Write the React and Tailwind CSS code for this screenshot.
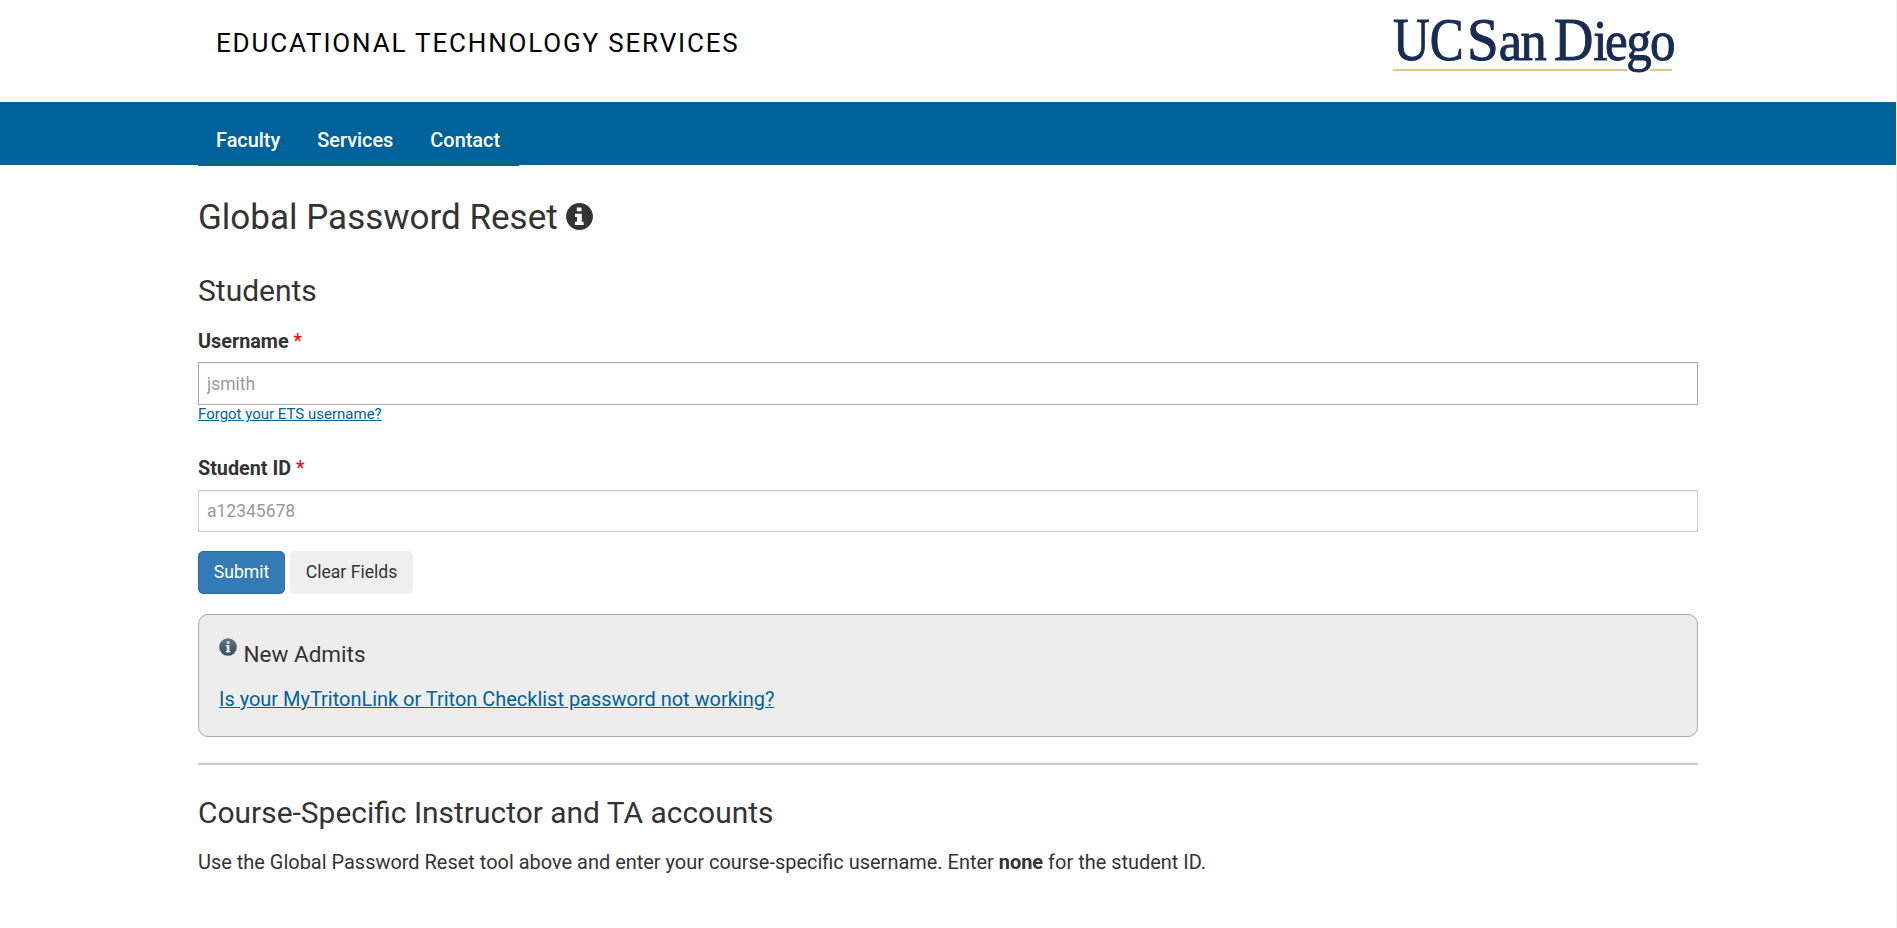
import React from "react";

function InfoGlyph() {
  return (
    <svg className="block h-[27px] w-[27px]" viewBox="0 0 27 27">
      <circle cx="13.5" cy="13.5" r="13.4" fill="#333" />
      <path fill="#fff" d="M10.8 4.4h4.7v3.9h-4.7zM9 10.7h6.8v8h1.9v3.3H9v-3.3h2V14H9z" />
    </svg>
  );
}

function NoticeIcon() {
  return (
    <svg className="block h-[18px] w-[18px]" viewBox="0 0 18 18">
      <defs>
        <linearGradient id="notice" x1="0" y1="0" x2="0" y2="1">
          <stop offset="0" stopColor="#5b7486" />
          <stop offset="1" stopColor="#3a4b58" />
        </linearGradient>
      </defs>
      <circle cx="9" cy="9" r="8.8" fill="url(#notice)" />
      <path fill="#dde3e8" d="M7.6 3.2h2.9v2.5H7.6zM6.8 6.9h3.7v6.2h.9v1.4H6.8v-1.4h.9V8.3h-.9z" />
    </svg>
  );
}

function Logo() {
  return (
    <svg className="block h-[80px] w-[290px]" viewBox="0 0 290 80">
      <path d="M0 70h234M257 70h22" stroke="#e6c28a" strokeWidth="2" />
      <g fill="#182b54" stroke="#182b54" strokeWidth="1" className="font-['Liberation_Serif',serif] text-[62px]">
        <text transform="translate(0 60.2) scale(.82 1)" x="0 44.8" y="0">
          UC
        </text>
        <text transform="translate(0 60.2) scale(.92 1)" x="80.5" y="0">
          S<tspan x="115 138.5" className="text-[57px]">an</tspan>
        </text>
        <text transform="translate(0 60.2) scale(.88 1)" x="183" y="0">
          D<tspan x="227.5 241 265 292" className="text-[58px]">iego</tspan>
        </text>
      </g>
    </svg>
  );
}

const links = ["Faculty", "Services", "Contact"];

function Label({ children }) {
  return (
    <label className="block text-[19.8px] leading-[28px] font-bold">
      {children} <span className="font-normal text-[#f00]">*</span>
    </label>
  );
}

export default function App() {
  return (
    <div className="flex h-[928px] overflow-hidden bg-white font-['Roboto',sans-serif] text-[#333]">
      <div className="min-w-0 flex-1">
        <header className="mx-auto flex h-[102px] w-[1500px] justify-between pl-[18px]">
          <div className="pt-[27px] text-[26px] leading-[32px] tracking-[1.83px] text-black">
            EDUCATIONAL TECHNOLOGY SERVICES
          </div>
          <div className="pr-[15px]">
            <Logo />
          </div>
        </header>
        <nav className="h-[63px] bg-[#00629b]">
          <div className="mx-auto w-[1500px]">
            <ul className="flex h-[64px] w-[321px] gap-[37px] bg-[#00629b] pt-[24px] pl-[18px] text-[19.9px] leading-[30px] font-medium text-white">
              {links.map((l) => (
                <li key={l}>{l}</li>
              ))}
            </ul>
          </div>
        </nav>
        <main className="mx-auto w-[1500px]">
          <h1 className="flex items-center gap-[8px] pt-[33px] text-[35px] leading-[40px]">
            Global Password Reset{" "}
            <span className="-mt-[4px]">
              <InfoGlyph />
            </span>
          </h1>
          <h2 className="pt-[35px] text-[30px] leading-[36px]">Students</h2>
          <div className="pt-[19px]">
            <Label>Username</Label>
            <input
              className="mt-[6px] block h-[43px] w-full border border-[#aaa] px-[8px] text-[17.5px] shadow-[inset_0_1px_1px_rgba(0,0,0,0.075)] placeholder:text-[#999]"
              placeholder="jsmith"
            />
            <a className="block w-fit text-[15px] leading-[18px] text-[#00629b] underline">Forgot your ETS username?</a>
          </div>
          <div className="pt-[32px]">
            <Label>Student ID</Label>
            <input
              className="mt-[7px] block h-[42px] w-full border border-[#ccc] px-[8px] text-[17.5px] shadow-[inset_0_1px_1px_rgba(0,0,0,0.075)] placeholder:text-[#999]"
              placeholder="a12345678"
            />
          </div>
          <div className="flex gap-[5px] pt-[19px] text-[17.6px]">
            <button className="h-[43px] w-[87px] rounded-[5px] border border-[#2e6da4] bg-[#337ab7] text-white">
              Submit
            </button>
            <button className="h-[43px] w-[123px] rounded-[5px] bg-[#efefef]">Clear Fields</button>
          </div>
          <section className="mt-[20px] h-[123px] rounded-[10px] border border-[#aaa] bg-[#ededed] px-[20px] pt-[23px]">
            <h3 className="flex gap-[6.5px] text-[22.5px] leading-[32px]">
              <NoticeIcon />
              New Admits
            </h3>
            <a className="mt-[14px] block w-fit text-[19.97px] leading-[30px] text-[#00629b] underline">
              Is your MyTritonLink or Triton Checklist password not working?
            </a>
          </section>
          <hr className="mt-[25px] h-[3px] border-t border-b-2 border-t-[#eee] border-b-[#ccc]" />
          <h2 className="pt-[30px] text-[29.95px] leading-[36px]">Course-Specific Instructor and TA accounts</h2>
          <p className="pt-[16px] text-[19.97px] leading-[30px]">
            Use the Global Password Reset tool above and enter your course-specific username. Enter <b>none</b> for the
            student ID.
          </p>
        </main>
      </div>
      <div className="w-px bg-[#f1f1f1]" />
    </div>
  );
}
